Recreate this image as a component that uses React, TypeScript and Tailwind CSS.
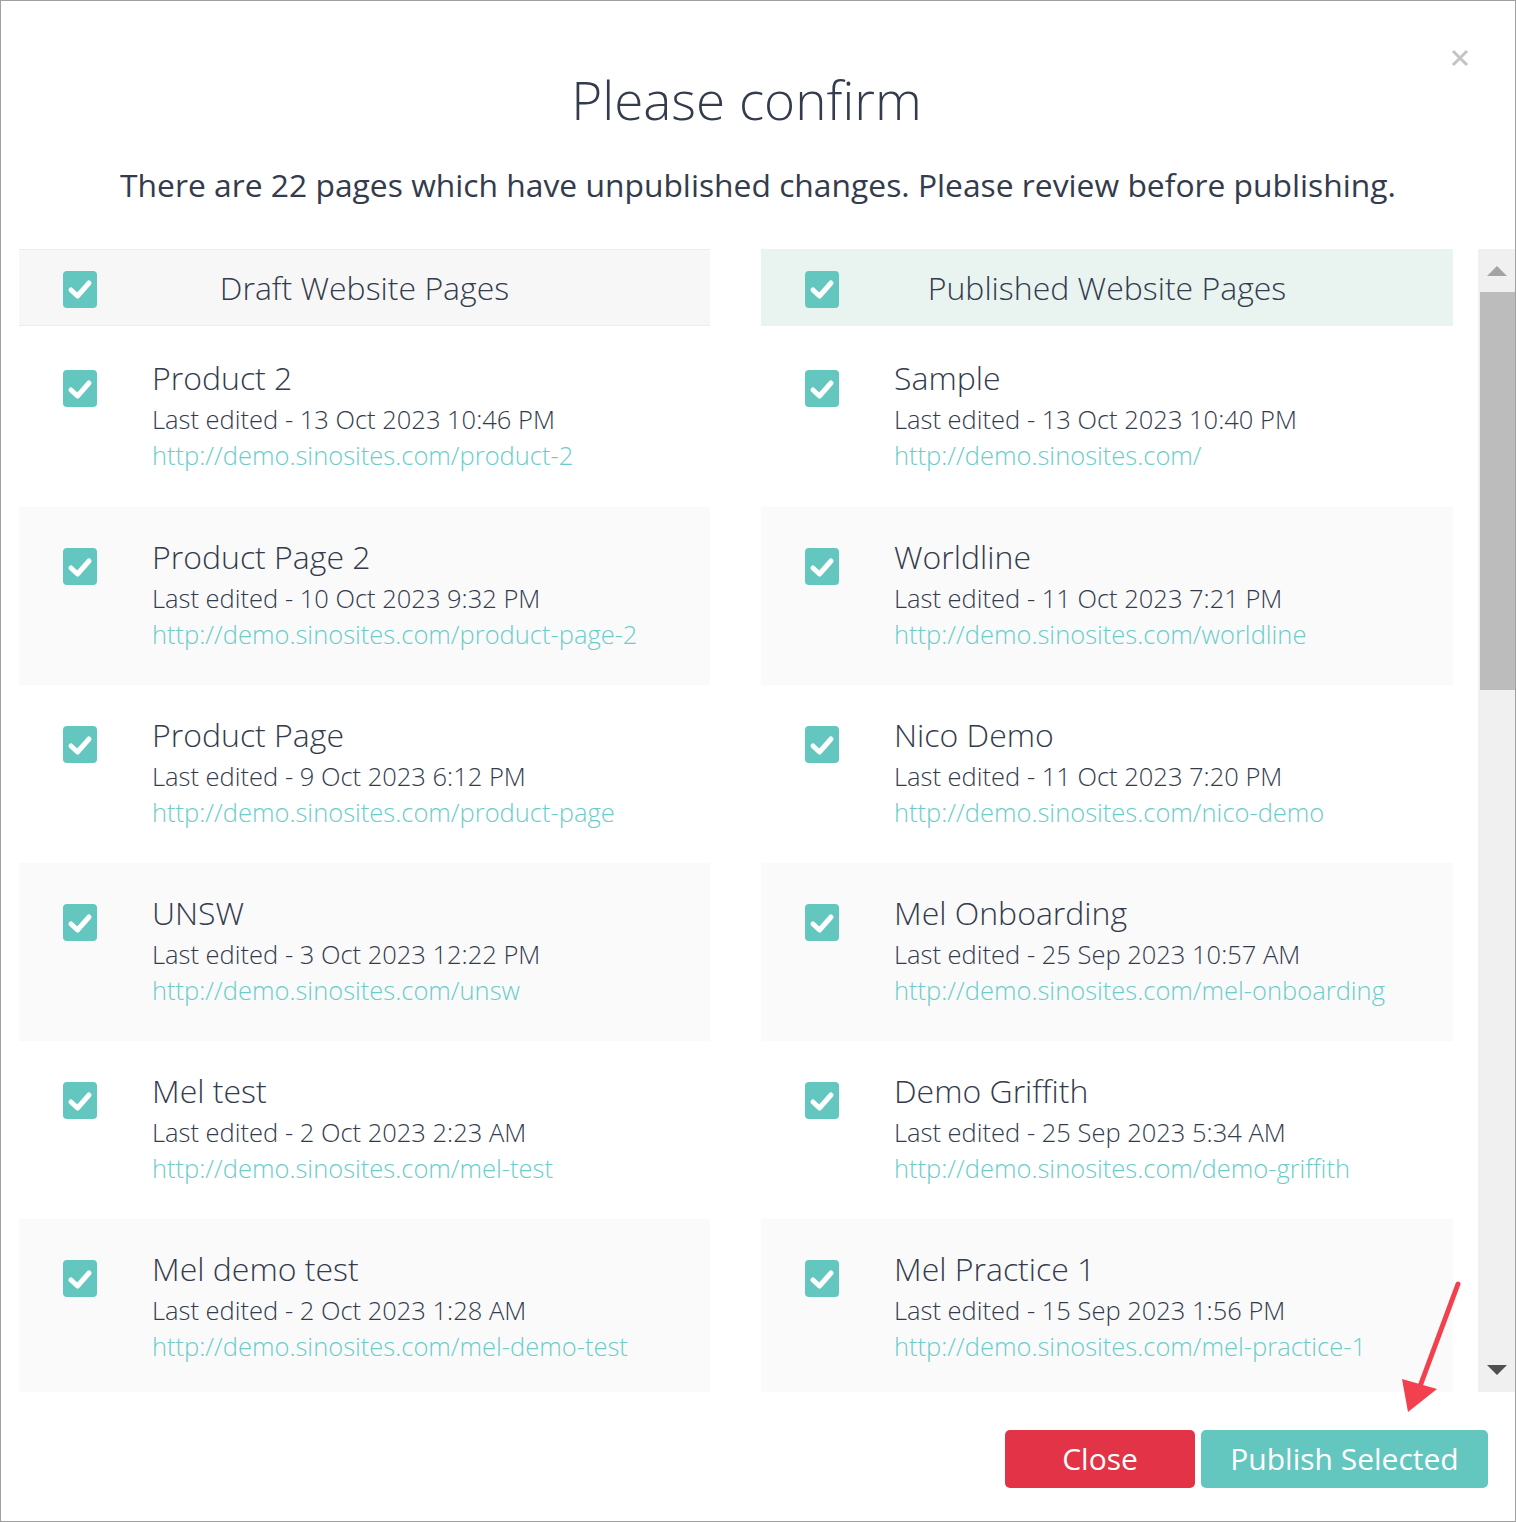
import React from "react";

type Item = { title: string; date: string; slug: string };

const draft: Item[] = [
  { title: "Product 2", date: "13 Oct 2023 10:46 PM", slug: "product-2" },
  { title: "Product Page 2", date: "10 Oct 2023 9:32 PM", slug: "product-page-2" },
  { title: "Product Page", date: "9 Oct 2023 6:12 PM", slug: "product-page" },
  { title: "UNSW", date: "3 Oct 2023 12:22 PM", slug: "unsw" },
  { title: "Mel test", date: "2 Oct 2023 2:23 AM", slug: "mel-test" },
  { title: "Mel demo test", date: "2 Oct 2023 1:28 AM", slug: "mel-demo-test" },
];

const published: Item[] = [
  { title: "Sample", date: "13 Oct 2023 10:40 PM", slug: "" },
  { title: "Worldline", date: "11 Oct 2023 7:21 PM", slug: "worldline" },
  { title: "Nico Demo", date: "11 Oct 2023 7:20 PM", slug: "nico-demo" },
  { title: "Mel Onboarding", date: "25 Sep 2023 10:57 AM", slug: "mel-onboarding" },
  { title: "Demo Griffith", date: "25 Sep 2023 5:34 AM", slug: "demo-griffith" },
  { title: "Mel Practice 1", date: "15 Sep 2023 1:56 PM", slug: "mel-practice-1" },
];

function Check() {
  return (
    <div className="w-[34px] h-[37px] rounded-[4px] bg-[#64c7bf] flex items-center justify-center shrink-0">
      <svg width="26" height="22" viewBox="0 0 26 22">
        <path
          d="M4 12 L10.5 18 L22 5"
          fill="none"
          stroke="#ffffff"
          strokeWidth="5"
          strokeLinecap="round"
          strokeLinejoin="round"
        />
      </svg>
    </div>
  );
}

function Header({ label, tint }: { label: string; tint: boolean }) {
  return (
    <div
      className={
        "h-[77px] grid grid-cols-[1fr_auto_1fr] items-center " +
        (tint ? "bg-[#e9f3f0]" : "bg-[#f7f7f7] border-y border-[#ececec]")
      }
    >
      <div className="pl-[44px] pt-[3px]">
        <Check />
      </div>
      <div className="text-[32px] font-light text-[#343b4d] leading-none">{label}</div>
      <div />
    </div>
  );
}

function Row({ item, alt, first }: { item: Item; alt: boolean; first: boolean }) {
  return (
    <div
      className={
        "flex " +
        (first ? "h-[181px] pt-[33px] " : "h-[178px] pt-[31px] ") +
        (alt ? "bg-[#fafafa]" : "bg-white")
      }
    >
      <div className={"pl-[44px] w-[133px] shrink-0 " + (first ? "pt-[11px]" : "pt-[10px]")}>
        <Check />
      </div>
      <div className="flex flex-col">
        <div className="text-[32px] leading-[38px] font-light text-[#343b4d] whitespace-nowrap">{item.title}</div>
        <div className="mt-[4px] text-[25.5px] leading-[36px] font-light text-[#343b4d] whitespace-nowrap">
          Last edited - {item.date}
        </div>
        <div className="text-[25.5px] leading-[36px] font-light text-[#6acdca] whitespace-nowrap">
          http://demo.sinosites.com/{item.slug}
        </div>
      </div>
    </div>
  );
}

function Column({ label, tint, items }: { label: string; tint: boolean; items: Item[] }) {
  return (
    <div className="flex flex-col">
      <Header label={label} tint={tint} />
      {items.map((it, i) => (
        <Row key={it.title} item={it} alt={i % 2 === 1} first={i === 0} />
      ))}
    </div>
  );
}

export default function App() {
  return (
    <div
      className="relative w-[1516px] h-[1522px] border border-[#a0a0a0] bg-white overflow-hidden flex flex-col"
      style={{ fontFamily: '"Open Sans", "Noto Sans", sans-serif' }}
    >
      <div className="absolute right-[46px] top-[48px]">
        <svg width="18" height="18" viewBox="0 0 18 18">
          <path d="M3 3 L15 15 M15 3 L3 15" stroke="#c4c4c4" strokeWidth="3" strokeLinecap="square" />
        </svg>
      </div>

      <div className="pt-[67px] flex flex-col items-center">
        <h1 className="pr-[23px] text-[53px] leading-[64px] font-light text-[#343b4d]">Please confirm</h1>
        <p className="mt-[32px] text-[31.8px] leading-[42px] text-[#343b4d]">
          There are 22 pages which have unpublished changes. Please review before publishing.
        </p>
      </div>

      <div className="mt-[43px] flex pl-[18px] h-[1143px] overflow-hidden">
        <div className="w-[1434px] grid grid-cols-[691px_692px] gap-x-[51px] items-start">
          <Column label="Draft Website Pages" tint={false} items={draft} />
          <Column label="Published Website Pages" tint={true} items={published} />
        </div>
        <div className="ml-[25px] w-[37px] bg-[#f0f0f0] flex flex-col">
          <div className="h-[43px] flex items-center justify-center">
            <svg width="22" height="12" viewBox="0 0 22 12">
              <path d="M11 1 L21 11 L1 11 Z" fill="#a3a3a3" />
            </svg>
          </div>
          <div className="ml-[2px] h-[398px] bg-[#bcbcbc]" />
          <div className="flex-1" />
          <div className="h-[44px] flex items-start justify-center pt-[16px]">
            <svg width="22" height="12" viewBox="0 0 22 12">
              <path d="M1 1 L21 1 L11 11 Z" fill="#505050" />
            </svg>
          </div>
        </div>
      </div>

      <div className="mt-[38px] flex justify-end gap-[6px] pr-[27px]">
        <button className="w-[190px] h-[58px] rounded-[5px] bg-[#e23347] text-white text-[30px] leading-none">
          Close
        </button>
        <button className="w-[287px] h-[58px] rounded-[5px] bg-[#64c7bf] text-white text-[30px] leading-none">
          Publish Selected
        </button>
      </div>

      <svg className="absolute left-0 top-0 pointer-events-none" width="1516" height="1522">
        <line x1="1457" y1="1283" x2="1418" y2="1388" stroke="#f2404f" strokeWidth="5" strokeLinecap="round" />
        <path d="M1407 1411 L1401 1378 L1436 1388 Z" fill="#f2404f" />
      </svg>
    </div>
  );
}
